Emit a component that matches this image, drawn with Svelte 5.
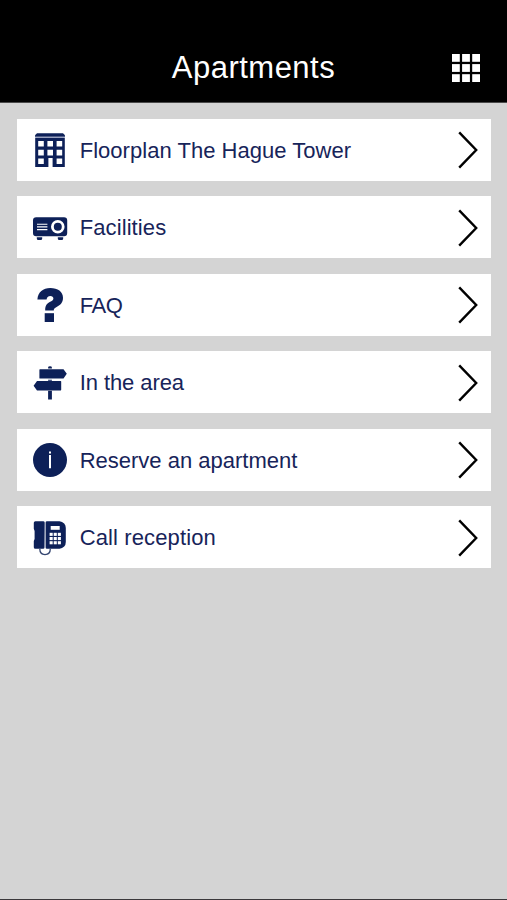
<script lang="ts">
  type Item = { icon: string; label: string; spacing: number };

  // spacing is the tracking of the label in px
  const items: Item[] = [
    { icon: 'building', label: 'Floorplan The Hague Tower', spacing: 0.03 },
    { icon: 'projector', label: 'Facilities', spacing: 0.1 },
    { icon: 'question', label: 'FAQ', spacing: -0.4 },
    { icon: 'signpost', label: 'In the area', spacing: -0.08 },
    { icon: 'info', label: 'Reserve an apartment', spacing: 0 },
    { icon: 'phone', label: 'Call reception', spacing: 0.12 },
  ];

  const steps = [0, 1, 2];
</script>

<div class="screen">
  <header>
    <h1>Apartments</h1>
    <button class="grid-button" aria-label="Menu">
      <svg width="28" height="28" viewBox="0 0 28 28">
        {#each steps as row}
          {#each steps as col}
            <rect x={col * 10.1} y={row * 10.1} width="7.8" height="7.8" fill="#fff" />
          {/each}
        {/each}
      </svg>
    </button>
  </header>

  <nav>
    {#each items as item}
      <button class="item">
        <svg class="icon" viewBox="0 0 36 36">
          {#if item.icon === 'building'}
            <path d="M5 1.2h26l2 2v1.6H3V3.2z" />
            <path
              fill-rule="evenodd"
              d="M3.2 6h29.6v29H20.6v-9h-4.2v9H3.2zM6.2 9v5.6h5.6V9zm9.2 0v5.6h5.6V9zm9.2 0v5.6h5.6V9zM6.2 17.8v5.6h5.6v-5.6zm9.2 0v5.6h5.6v-5.6zm9.2 0v5.6h5.6v-5.6zM6.2 26.4V32h5.6v-5.6zm18.4 0V32h5.6v-5.6z"
            />
            <path d="M3.2 5.4h29.6" stroke="#8e98b9" />
          {:else if item.icon === 'projector'}
            <rect x="1" y="7.2" width="34.2" height="19" rx="3.2" />
            <path d="M4.8 27.3h5.4v1.2q0 1.5-1.5 1.5H6.3q-1.5 0-1.5-1.5zM25.8 27.3h5.4v1.2q0 1.5-1.5 1.5h-2.4q-1.5 0-1.5-1.5z" />
            <circle cx="25.8" cy="16.7" r="5.4" fill="none" stroke="#fff" stroke-width="2.8" />
            <path d="M5 14.2h10.4M5 16.9h10.4M5 19.6h10.4" stroke="#fff" stroke-width="1.1" />
          {:else if item.icon === 'question'}
            <path d="M5.4 12.5C6 5 11 1 18.3 1 25.8 1 31 4.6 31 10.8c0 5-2.7 7.2-6 9-2.6 1.4-3.2 1.9-3.2 3.6h-8.6c0-4.6 1.2-6.6 4.5-8.4 2.4-1.3 3.7-2 3.7-3.6 0-1.6-1.2-2.5-3-2.5-2.4 0-3.5 1.2-3.8 3.6z" />
            <rect x="12.7" y="26.2" width="9.3" height="8.8" />
          {:else if item.icon === 'signpost'}
            <path d="M16.1 3.6V2.4q0-1.2 1.9-1.2t1.9 1.2v1.2zM16.1 14.8h3.8v1h-3.8zM16.1 25.8h3.8v8.6h-3.8z" />
            <path d="M8 4.2h23.5l3.3 4.6-3.3 4.8H8q-.6 0-.6-.6V4.8q0-.6.6-.6zM28.6 16H5l-3.4 4.8L5 25.4h23.6q.6 0 .6-.6v-8.2q0-.6-.6-.6z" />
          {:else if item.icon === 'info'}
            <circle cx="18" cy="18" r="17" />
            <path d="M18 12.9v13.3M18 9.4v2.1" stroke="#fff" stroke-width="2" />
          {:else}
            <path d="M3.4 1.2h7.8q1.4 0 1.5 1.4l-.2 24.8q0 1.4-1.4 1.4H3.4q-1.6 0-1.6-1.5V21l.8-2v-8l-.8-2.2V2.7q0-1.5 1.6-1.5z" />
            <path d="M15 1.2h12.5q2.7.2 4.7 2.3 1.6 1.7 1.6 4.5v14q0 2.8-1.6 4.5-2 2.1-4.7 2.3H15q-1.4 0-1.4-1.4V2.6q0-1.4 1.4-1.4z" />
            <path d="M7.8 28.8c0 4 2 5.8 5.2 5.8s5.3-1.8 5.3-5.8" fill="none" stroke="#33446f" stroke-width="1.3" />
            <rect x="18.7" y="6" width="9" height="3.8" fill="#fff" />
            {#each steps as row}
              {#each steps as col}
                <rect x={17.6 + col * 4.1} y={12.8 + row * 4.2} width="3.1" height="3.1" fill="#fff" />
              {/each}
            {/each}
          {/if}
        </svg>
        <span class="label" style="letter-spacing: {item.spacing}px">{item.label}</span>
        <svg class="chevron" viewBox="0 0 20 38">
          <path d="M1.2 1.3L18.2 19 1.2 36.7" />
        </svg>
      </button>
    {/each}
  </nav>
</div>

<style>
  :global(body) {
    margin: 0;
    background: #d4d4d4;
  }

  .screen {
    box-sizing: border-box;
    height: 900px;
    background: #d4d4d4;
    border-bottom: 1px solid #3a383b;
    font-family: "Liberation Sans", Arial, sans-serif;
    overflow: hidden;
  }

  header {
    box-sizing: border-box;
    height: 103px;
    padding: 33px 27px 0 0;
    display: grid;
    grid-template-columns: 1fr auto 1fr;
    align-items: center;
    background: #000;
    border-bottom: 1px solid #4a4a4a;
  }

  h1 {
    grid-column: 2;
    margin: 0 0 0 27px;
    color: #fff;
    font-size: 31px;
    font-weight: 400;
    line-height: 36px;
    letter-spacing: 0.48px;
  }

  button {
    border: 0;
    padding: 0;
    font: inherit;
    cursor: pointer;
  }

  .grid-button {
    justify-self: end;
    padding-top: 1px;
    background: none;
    line-height: 0;
  }

  nav {
    display: flex;
    flex-direction: column;
    gap: 15.5px;
    padding: 15.5px 16px 0 16.5px;
  }

  .item {
    display: flex;
    align-items: center;
    height: 62px;
    padding: 0 13.5px 0 15.5px;
    background: #fff;
    color: #17245a;
    text-align: left;
  }

  .icon {
    flex: none;
    width: 36px;
    height: 36px;
    margin-top: 1px;
    fill: #0d2058;
  }

  .label {
    flex: 1;
    margin: 2px 0 0 11.7px;
    font-size: 22px;
    line-height: 28px;
    white-space: nowrap;
  }

  .chevron {
    flex: none;
    width: 20px;
    height: 38px;
    margin-top: 1px;
    fill: none;
    stroke: #000;
    stroke-width: 2.4;
  }
</style>
